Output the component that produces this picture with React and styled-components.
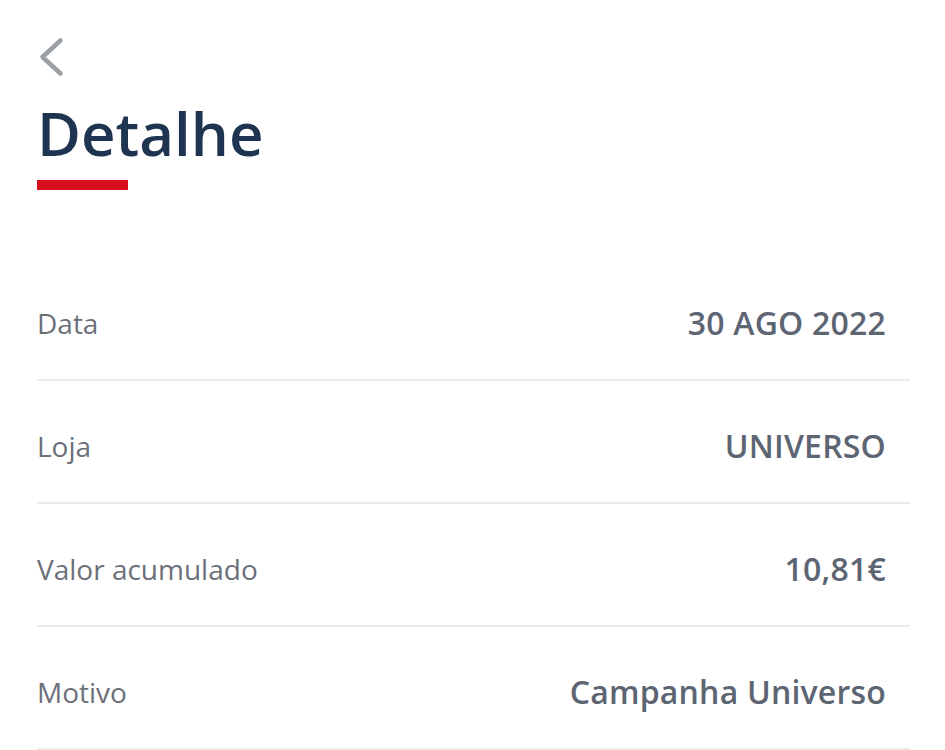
import React from 'react';
import styled, { createGlobalStyle } from 'styled-components';

const GlobalStyle = createGlobalStyle`
  html, body {
    margin: 0;
    padding: 0;
    background: #ffffff;
  }
  body {
    font-family: "Open Sans", "Noto Sans", sans-serif;
  }
`

const Page = styled.div`
  padding: 37px 35px 0 37px;
  box-sizing: border-box;
  width: 945px;
  min-height: 750px;
  background: #fff;
`

const BackButton = styled.button`
  display: block;
  border: none;
  background: none;
  padding: 0;
  margin: 0 0 0 1px;
  width: 26px;
  height: 40px;
  cursor: pointer;
  color: #9ba0a7;
`

const Title = styled.h1`
  margin: 20px 0 0 0;
  font-size: 60px;
  line-height: 72px;
  font-weight: 600;
  color: #1f3450;
`

const Underline = styled.div`
  width: 91px;
  height: 10px;
  background: #d8101d;
  margin-top: 11px;
`

const List = styled.div`
  margin-top: 68px;
`

const Row = styled.div`
  display: flex;
  align-items: center;
  justify-content: space-between;
  height: 123px;
  padding: 8px 24px 0 0;
  box-sizing: border-box;
  border-bottom: 2px solid #ebebeb;
`

const Label = styled.span`
  font-size: 28px;
  font-weight: 400;
  color: #6b7079;
`

const Value = styled.span`
  font-size: 32px;
  font-weight: 600;
  color: #5d6573;
  letter-spacing: 0.2px;
`

const rows = [
  { label: 'Data', value: '30 AGO 2022' },
  { label: 'Loja', value: 'UNIVERSO' },
  { label: 'Valor acumulado', value: '10,81€' },
  { label: 'Motivo', value: 'Campanha Universo' },
];

const App = () => {
  return (
    <Page>
      <GlobalStyle />
      <BackButton aria-label="Voltar">
        <svg width="26" height="40" viewBox="0 0 26 40" fill="none">
          <path d="M22.5 3.5 L4.5 20 L22.5 36.5" stroke="currentColor" strokeWidth="4.5" strokeLinecap="round" strokeLinejoin="round" />
        </svg>
      </BackButton>
      <Title>Detalhe</Title>
      <Underline />
      <List>
        {rows.map(r => (
          <Row key={r.label}>
            <Label>{r.label}</Label>
            <Value>{r.value}</Value>
          </Row>
        ))}
      </List>
    </Page>
  );
};

export default App;
